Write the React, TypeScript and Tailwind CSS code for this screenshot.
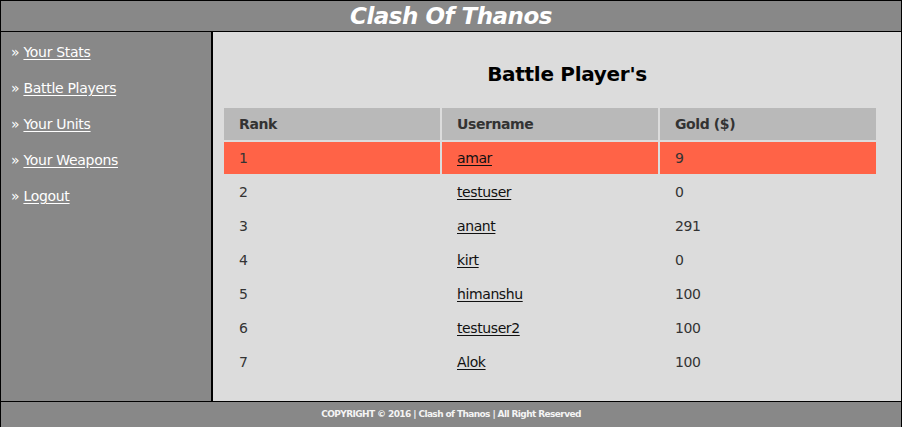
const menu = ['Your Stats', 'Battle Players', 'Your Units', 'Your Weapons', 'Logout']

const players = [
  { rank: 1, name: 'amar', gold: 9 },
  { rank: 2, name: 'testuser', gold: 0 },
  { rank: 3, name: 'anant', gold: 291 },
  { rank: 4, name: 'kirt', gold: 0 },
  { rank: 5, name: 'himanshu', gold: 100 },
  { rank: 6, name: 'testuser2', gold: 100 },
  { rank: 7, name: 'Alok', gold: 100 },
]

export default function App() {
  return (
    <div className="w-[902px] h-[427px] overflow-hidden border-l border-t border-r border-black bg-[#888888] font-['DejaVu_Sans',sans-serif]">
      {/* Header */}
      <div className="h-[31px] border-b border-black flex items-center justify-center">
        <h1 className="text-[23px] leading-none font-bold italic text-white tracking-[-0.5px]">Clash Of Thanos</h1>
      </div>

      <div className="flex h-[369px]">
        {/* Sidebar */}
        <div className="w-[212px] border-r-2 border-black pt-[11px] pl-[10px]">
          {menu.map((m) => (
            <div key={m} className="h-[36px] text-[14px] leading-[18px] text-white tracking-[-0.3px]">
              <span>» </span>
              <a href="#" className="underline underline-offset-2">{m}</a>
            </div>
          ))}
        </div>

        {/* Main */}
        <div className="flex-1 bg-[#dcdcdc] pl-[9px]">
          <h2 className="text-[20px] font-bold text-black text-center w-[656px] pl-[34px] pt-[30px] pb-[20px] leading-[24px] tracking-[-0.3px]">
            Battle Player's
          </h2>
          <table className="w-[656px] border-separate border-spacing-[2px] text-[14px] text-[#333333] tracking-[-0.4px]">
            <thead>
              <tr className="bg-[#b9b9b9]">
                <th className="h-[32px] text-left font-bold pl-[15px] w-[216px]">Rank</th>
                <th className="h-[32px] text-left font-bold pl-[15px] w-[216px]">Username</th>
                <th className="h-[32px] text-left font-bold pl-[15px]">Gold ($)</th>
              </tr>
            </thead>
            <tbody>
              {players.map((p, i) => (
                <tr key={p.rank} className={i === 0 ? 'bg-[#ff6347]' : ''}>
                  <td className="h-[32px] pl-[15px]">{p.rank}</td>
                  <td className="h-[32px] pl-[15px]">
                    <a href="#" className="underline text-[#111111] underline-offset-2">{p.name}</a>
                  </td>
                  <td className="h-[32px] pl-[15px]">{p.gold}</td>
                </tr>
              ))}
            </tbody>
          </table>
        </div>
      </div>

      {/* Footer */}
      <div className="border-t border-black h-[26px] flex items-center justify-center">
        <p className="text-[9px] font-bold text-[#f4f4f4] tracking-[-0.6px]">
          COPYRIGHT © 2016 | Clash of Thanos | All Right Reserved
        </p>
      </div>
    </div>
  )
}
